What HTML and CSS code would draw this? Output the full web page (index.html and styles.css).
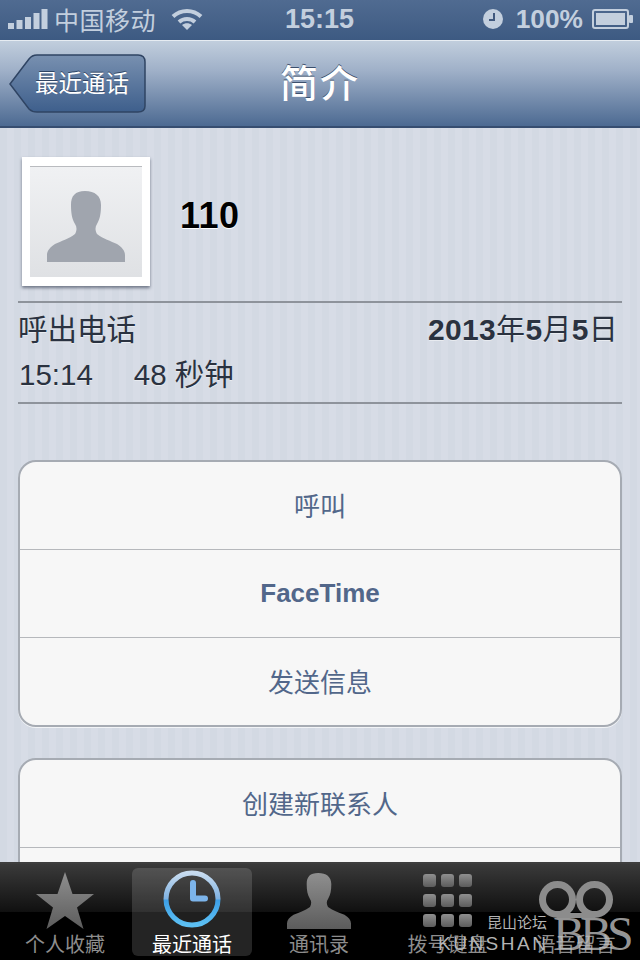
FILE: index.html
```html
<!DOCTYPE html>
<html lang="zh">
<head>
<meta charset="utf-8">
<title>简介</title>
<link rel="stylesheet" href="styles.css">
</head>
<body>
<div class="app">
  <header class="status">
    <div class="status-left">
      <svg class="signal" width="40" height="20" viewBox="0 0 40 20"><g fill="#c3cfde"><rect x="0" y="14" width="6" height="6"/><rect x="8.500" y="11" width="6" height="9"/><rect x="17" y="8" width="6" height="12"/><rect x="25.500" y="4" width="6" height="16"/><rect x="33.500" y="0" width="6" height="20"/></g></svg>
      <span class="carrier">中国移动</span>
      <svg class="wifi" width="32" height="22" viewBox="0 0 32 22"><g fill="none" stroke="#c3cfde" stroke-width="4"><path d="M2 8.500C10 1 22 1 30 8.500"/><path d="M8 14C12.500 10 19.500 10 24 14"/></g><path d="M16 22l-5-5c3-2.200 7-2.200 10 0z" fill="#c3cfde"/></svg>
    </div>
    <div class="time">15:15</div>
    <div class="status-right">
      <svg width="20" height="20" viewBox="0 0 20 20"><circle cx="10" cy="10" r="10" fill="#c3cfde"/><path d="M11 4v7H6" fill="none" stroke="#41597e" stroke-width="2"/></svg>
      <span class="battery-pct">100%</span>
      <svg width="42" height="20" viewBox="0 0 42 20"><rect x="1" y="1" width="35" height="18" rx="2" fill="none" stroke="#c3cfde" stroke-width="2"/><rect x="4" y="4" width="29" height="12" fill="#c3cfde"/><rect x="37" y="6" width="4" height="8" rx="1" fill="#c3cfde"/></svg>
    </div>
  </header>

  <nav class="navbar">
    <div class="back"><svg class="back-shape" width="138" height="60" viewBox="0 0 138 60"><defs><linearGradient id="bk" x1="0" y1="0" x2="0" y2="1"><stop offset="0" stop-color="#7890b0"/><stop offset="1" stop-color="#3e5f8c"/></linearGradient></defs><path d="M1 30 L20 5 Q23 1 28 1 H129 Q136 1 136 8 V52 Q136 58 129 58 H28 Q23 58 20 55 Z" fill="url(#bk)" stroke="#2f4463" stroke-width="1.500"/></svg><span class="back-label">最近通话</span></div>
    <h1 class="nav-title">简介</h1>
  </nav>

  <main class="content">
    <section class="profile">
      <div class="photo">
        <div class="photo-inner">
          <svg width="78" height="71" viewBox="0 0 78 71"><path d="M38 0C48 0 54 5 54 14C54 22 53 28 50 33C48 36 48 39 50 43C56 48 64 50 70 53C75 56 78 60 78 64V71H0V64C0 60 3 56 8 53C14 50 22 48 28 43C30 39 30 36 28 33C25 28 24 22 24 14C24 5 28 0 38 0Z" fill="#a0a5ae"/></svg>
        </div>
      </div>
      <div class="name">110</div>
    </section>

    <section class="call-info">
      <div class="info-row">
        <span>呼出电话</span>
        <span class="date"><strong>2013</strong>年<strong>5</strong>月<strong>5</strong>日</span>
      </div>
      <div class="info-row second">
        <span class="clock">15:14</span>
        <span>48 秒钟</span>
      </div>
    </section>

    <section class="group">
      <div class="group-row cjk">呼叫</div>
      <div class="group-row bold">FaceTime</div>
      <div class="group-row cjk">发送信息</div>
    </section>

    <section class="group">
      <div class="group-row cjk">创建新联系人</div>
      <div class="group-row"></div>
    </section>
  </main>

  <footer class="tabbar">
    <div class="tab">
      <svg class="tab-icon" width="60" height="60" viewBox="0 0 60 60"><defs><linearGradient id="gs" x1="0" y1="0" x2="0" y2="1"><stop offset="0" stop-color="#8f8f8f"/><stop offset="1" stop-color="#5c5c5c"/></linearGradient></defs><path d="M30 3L37.500 25H59L42 38.500L48.500 60L30 47L11.500 60L18 38.500L1 25H22.500Z" fill="url(#gs)"/></svg>
      <span>个人收藏</span>
    </div>
    <div class="tab active">
      <svg class="tab-icon" width="60" height="60" viewBox="0 0 60 60"><defs><linearGradient id="ring" x1="0" y1="0" x2="0" y2="1"><stop offset="0" stop-color="#c8dcf0"/><stop offset="0.500" stop-color="#7fb2e2"/><stop offset="0.520" stop-color="#3d9fe6"/><stop offset="1" stop-color="#5cc0f4"/></linearGradient></defs><circle cx="30" cy="30" r="26" fill="rgba(0,0,0,0.120)" stroke="url(#ring)" stroke-width="5"/><path d="M31 14V29.500H43" fill="none" stroke="#7cb4ea" stroke-width="6" stroke-linecap="round" stroke-linejoin="round"/></svg>
      <span>最近通话</span>
    </div>
    <div class="tab">
      <svg class="tab-icon" width="64" height="56" viewBox="0 0 78 71" preserveAspectRatio="none"><path d="M38 0C48 0 54 5 54 14C54 22 53 28 50 33C48 36 48 39 50 43C56 48 64 50 70 53C75 56 78 60 78 64V71H0V64C0 60 3 56 8 53C14 50 22 48 28 43C30 39 30 36 28 33C25 28 24 22 24 14C24 5 28 0 38 0Z" fill="url(#gs)"/></svg>
      <span>通讯录</span>
    </div>
    <div class="tab">
      <svg class="tab-icon keypad" width="49" height="53" viewBox="0 0 49 53"><g fill="url(#gs)"><rect x="0" y="0" width="13" height="13" rx="3"/><rect x="18" y="0" width="13" height="13" rx="3"/><rect x="36" y="0" width="13" height="13" rx="3"/><rect x="0" y="20" width="13" height="13" rx="3"/><rect x="18" y="20" width="13" height="13" rx="3"/><rect x="36" y="20" width="13" height="13" rx="3"/><rect x="0" y="40" width="13" height="13" rx="3"/><rect x="18" y="40" width="13" height="13" rx="3"/><rect x="36" y="40" width="13" height="13" rx="3"/></g></svg>
      <span>拨号键盘</span>
    </div>
    <div class="tab">
      <svg class="tab-icon voicemail" width="74" height="37" viewBox="0 0 74 37"><g fill="none" stroke="#8c8c8c"><circle cx="18.500" cy="18.500" r="15" stroke-width="7"/><circle cx="55.500" cy="18.500" r="15" stroke-width="7"/><path d="M18.500 34.500H55.500" stroke-width="5"/></g></svg>
      <span>语音留言</span>
    </div>
    <div class="watermark">
      <span class="wm-cn">昆山论坛</span>
      <span class="wm-en">KUNSHAN</span>
      <span class="wm-bbs">BBS</span>
    </div>
  </footer>
</div>
</body>
</html>
```
FILE: styles.css
```css
* { box-sizing: border-box; margin: 0; padding: 0; }
html, body { width: 640px; height: 960px; overflow: hidden; }
body { font-family: "Liberation Sans", "Noto Sans CJK SC", sans-serif; background: #d4dae4; }
.app { width: 640px; height: 960px; display: flex; flex-direction: column; overflow: hidden; }

.status { height: 41px; flex: none; display: flex; align-items: center; justify-content: space-between; padding: 0 6px 2px 8px; position: relative; color: #c3cfde; background: linear-gradient(#506b91, #3d5a82); border-bottom: 1px solid #e6ecf2; }
.status-left { display: flex; align-items: center; width: 200px; }
.carrier { font-size: 25px; margin-left: 6px; white-space: nowrap; letter-spacing: 0.500px; }
.wifi { margin-left: 15px; }
.time { position: absolute; left: 285px; top: 3px; font-size: 27px; line-height: 32px; font-weight: bold; }
.status-right { display: flex; align-items: center; gap: 13px; }
.battery-pct { font-size: 26.300px; font-weight: bold; margin-right: -4px; }

.navbar { height: 87px; flex: none; display: flex; align-items: center; justify-content: center; position: relative; background: linear-gradient(#c1cedd, #9fb0c8 35%, #4c6a92); border-bottom: 2px solid #364d70; }
.back { position: absolute; left: 9px; top: 13px; width: 138px; height: 60px; display: flex; align-items: center; padding-bottom: 4px; }
.back-shape { position: absolute; left: 0; top: 0; }
.back-label { position: relative; margin-left: 26px; font-size: 23.500px; color: #fff; text-shadow: 0 -1px 0 #2f4463; white-space: nowrap; }
.nav-title { font-size: 38px; font-weight: 500; color: #fff; line-height: 44px; letter-spacing: 2px; text-shadow: 0 -1px 0 #3c4f6c; margin-top: 1px; }

.content { flex: 1; min-height: 0; overflow: hidden; padding: 29px 18px 0; background: repeating-linear-gradient(90deg, #d3d9e3 0, #d3d9e3 7px, #d7dce6 7px, #d7dce6 14px); }

.profile { display: flex; gap: 30px; padding-left: 4px; height: 144px; align-items: flex-start; }
.photo { width: 128px; height: 129px; background: #fff; padding: 9px 8px; box-shadow: 0 2px 3px rgba(40, 50, 70, 0.600); flex: none; }
.photo-inner { width: 112px; height: 111px; background: linear-gradient(#f0f1f3, #dfe1e4); border-top: 1px solid #b9bbbf; display: flex; justify-content: center; align-items: flex-end; padding-bottom: 15px; }
.name { font-size: 36px; font-weight: bold; color: #000; line-height: 40px; letter-spacing: 0.500px; margin-top: 39px; text-shadow: 0 1px 0 #fff; }

.call-info { height: 103px; padding: 5px 4px 0 0; border-top: 2px solid #8e939b; border-bottom: 2px solid #8e939b; color: #2a3240; font-size: 29.500px; }
.info-row { display: flex; justify-content: space-between; line-height: 44px; height: 44px; align-items: baseline; text-shadow: 0 1px 0 #e8ebf0; }
.info-row.second { justify-content: flex-start; gap: 41px; margin-top: 1px; }
.clock { margin-left: 1px; }
.date { font-size: 29px; letter-spacing: 0.300px; }
.date strong { font-size: 30px; }

.group { margin-top: 56px; width: 604px; background: #f7f7f7; border: 2px solid #a6abb3; border-radius: 18px; box-shadow: 0 1px 0 #f2f4f7; overflow: hidden; flex: none; }
.group + .group { margin-top: 31px; }
.group-row { height: 88px; display: flex; align-items: center; justify-content: center; color: #52678a; font-size: 26px; border-bottom: 1px solid #b6b8bc; }
.group-row:last-child { border-bottom: 0; height: 87px; }
.group-row.cjk { padding-bottom: 2px; }
.bold { font-weight: bold; }

.tabbar { height: 98px; flex: none; display: grid; grid-template-columns: 130px 124px 130px 127px 129px; position: relative; padding: 4px 0; border-top: 2px solid #3e3e3e; background: linear-gradient(#3a3a3a, #101010 48px, #000 48px); }
.tab { display: flex; flex-direction: column; align-items: center; justify-content: flex-end; color: #8d8d8d; font-size: 20px; line-height: 22px; border-radius: 6px; white-space: nowrap; }
.tab.active { color: #fff; margin-left: 2px; width: 120px; background: rgba(255, 255, 255, 0.140); }
.tab-icon { flex: none; margin-bottom: 5px; }
.tab-icon.keypad { margin-bottom: 7px; }
.tab-icon.voicemail { margin-bottom: 16px; }

.watermark { position: absolute; left: 0; top: 0; width: 640px; height: 96px; color: #b4b4b4; pointer-events: none; }
.wm-cn { position: absolute; left: 487px; top: 50px; font-size: 15px; line-height: 18px; white-space: nowrap; }
.wm-en { position: absolute; left: 438px; top: 68px; font-size: 19px; line-height: 24px; letter-spacing: 2.500px; white-space: nowrap; }
.wm-bbs { position: absolute; left: 553px; top: 43px; font-family: "Liberation Serif", serif; font-size: 48px; line-height: 54px; letter-spacing: -5px; color: rgba(190, 190, 190, 0.800); white-space: nowrap; }
```
